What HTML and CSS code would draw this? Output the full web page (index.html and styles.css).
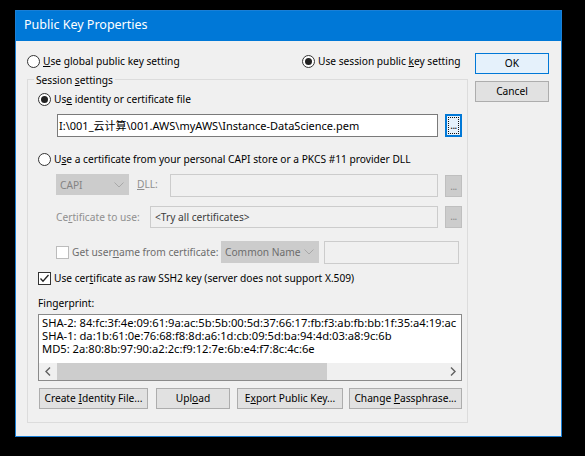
FILE: index.html
```html
<!DOCTYPE html>
<html lang="en">
<head>
<meta charset="utf-8">
<title>Public Key Properties</title>
<link rel="stylesheet" href="styles.css">
</head>
<body>
<div class="window">
  <div class="titlebar">Public Key Properties</div>
  <div class="client">
    <div class="main">
      <div class="scope-row">
        <div class="radio"><span class="rb"></span><span class="lbl"><u>U</u>se global public key setting</span></div>
        <div class="radio"><span class="rb on"></span><span class="lbl">Use session public <u>k</u>ey setting</span></div>
      </div>
      <div class="group">
        <div class="legend">Session <u>s</u>ettings</div>

        <div class="radio r-ident"><span class="rb on"></span><span class="lbl">Us<u>e</u> identity or certificate file</span></div>
        <div class="file-row">
          <div class="edit path">I:\001_云计算\001.AWS\myAWS\Instance-DataScience.pem</div>
          <div class="browse focus">...</div>
        </div>

        <div class="radio r-capi"><span class="rb"></span><span class="lbl">U<u>s</u>e a certificate from your personal CAPI store or a PKCS #11 provider DLL</span></div>
        <div class="capi-row">
          <div class="combo capi"><span>CAPI</span><svg class="chev" width="10" height="6" viewBox="0 0 10 6"><polyline points="0.5,0.5 5,5 9.5,0.5" fill="none" stroke="#a8a8a8" stroke-width="1"/></svg></div>
          <div class="dis-lbl dll"><u>D</u>LL:</div>
          <div class="edit dis"></div>
          <div class="browse dis">...</div>
        </div>

        <div class="cert-row">
          <div class="dis-lbl">Ce<u>r</u>tificate to use:</div>
          <div class="edit dis cert">&lt;Try all certificates&gt;</div>
          <div class="browse dis">...</div>
        </div>

        <div class="user-row">
          <div class="check-wrap"><span class="cb dis"></span><span class="user-lbl">Get user<u>n</u>ame from certificate:</span></div>
          <div class="combo cn"><span>Common Name</span><svg class="chev" width="10" height="6" viewBox="0 0 10 6"><polyline points="0.5,0.5 5,5 9.5,0.5" fill="none" stroke="#a8a8a8" stroke-width="1"/></svg></div>
          <div class="edit dis user-edit"></div>
        </div>

        <div class="raw-row">
          <span class="cb"><svg width="11" height="11" viewBox="0 0 11 11"><polyline points="1.5,5.5 4,8.2 9.5,2" fill="none" stroke="#222" stroke-width="1.3"/></svg></span>
          <span class="lbl">Use cer<u>t</u>ificate as raw SSH2 key (server does not support X.509)</span>
        </div>

        <div class="fp-label">Fingerprint:</div>
        <div class="fp-box">
          <div class="fp-text">
            <div>SHA-2: 84:fc:3f:4e:09:61:9a:ac:5b:5b:00:5d:37:66:17:fb:f3:ab:fb:bb:1f:35:a4:19:ac</div>
            <div>SHA-1: da:1b:61:0e:76:68:f8:8d:a6:1d:cb:09:5d:ba:94:4d:03:a8:9c:6b</div>
            <div>MD5: 2a:80:8b:97:90:a2:2c:f9:12:7e:6b:e4:f7:8c:4c:6e</div>
          </div>
          <div class="hscroll">
            <div class="sb-arrow"><svg width="6" height="9" viewBox="0 0 6 9"><polyline points="5,0.5 1,4.5 5,8.5" fill="none" stroke="#606060" stroke-width="1.4"/></svg></div>
            <div class="sb-thumb"></div>
            <div class="sb-track"></div>
            <div class="sb-arrow"><svg width="6" height="9" viewBox="0 0 6 9"><polyline points="1,0.5 5,4.5 1,8.5" fill="none" stroke="#606060" stroke-width="1.4"/></svg></div>
          </div>
        </div>

        <div class="btn-row">
          <button class="btn b-create">Create <u>I</u>dentity File...</button>
          <button class="btn b-upload">Upl<u>o</u>ad</button>
          <button class="btn b-export">E<u>x</u>port Public Key...</button>
          <button class="btn b-pass">Change <u>P</u>assphrase...</button>
        </div>
      </div>
    </div>
    <div class="side">
      <button class="btn default">OK</button>
      <button class="btn cancel">Cancel</button>
    </div>
  </div>
</div>
</body>
</html>
```

FILE: styles.css
```css
* { box-sizing: border-box; }
html, body { margin: 0; padding: 0; }
body {
  width: 585px;
  height: 456px;
  background: #000;
  overflow: hidden;
  font-family: "Noto Sans", "Noto Sans CJK SC", sans-serif;
  font-size: 10.2px;
  color: #000;
}
u { text-decoration: underline; text-underline-offset: 1px; }

.window {
  width: 547px;
  height: 427px;
  margin: 10px 0 0 15px;
  border: 1px solid #1a7fd6;
  background: #f0f0f0;
}
.titlebar {
  height: 30px;
  background: #0078d7;
  color: #fff;
  font-size: 12.5px;
  line-height: 28px;
  padding-left: 8px;
}
.client {
  display: grid;
  grid-template-columns: 459px 74px;
}
.main { padding: 13px 0 0 11px; }

.radio {
  display: flex;
  align-items: center;
  gap: 3px;
  height: 14px;
  line-height: 14px;
  white-space: nowrap;
}
.rb {
  width: 13px;
  height: 13px;
  border: 1px solid #333;
  border-radius: 50%;
  background: #fff;
  display: flex;
  align-items: center;
  justify-content: center;
  flex: none;
}
.rb.on::after {
  content: "";
  width: 7px;
  height: 7px;
  border-radius: 50%;
  background: #222;
}
.scope-row {
  display: grid;
  grid-template-columns: 275px auto;
  height: 14px;
}

.group {
  margin-top: 11px;
  width: 441px;
  height: 344px;
  border: 1px solid #dcdcdc;
  padding: 0 5px 0 10px;
}
.legend {
  width: fit-content;
  margin: -7px 0 0 -4px;
  padding: 0 2px;
  background: #f0f0f0;
  line-height: 15px;
  height: 14px;
}
.r-ident { margin-top: 5px; }

.edit {
  background: #fff;
  border: 1px solid #7a7a7a;
  white-space: nowrap;
  overflow: hidden;
}
.edit.dis {
  background: #f0f0f0;
  border-color: #cccccc;
}
.browse {
  width: 17px;
  background: #e1e1e1;
  border: 1px solid #adadad;
  text-align: center;
  font-size: 10px;
  line-height: 20px;
  letter-spacing: -0.5px;
}
.browse.focus {
  border: 2px solid #0078d7;
  background: #e5f1fb;
  outline: 1px dotted #111;
  outline-offset: -4px;
  color: #000;
  line-height: 19px;
}
.browse.dis {
  background: #cccccc;
  border-color: #bfbfbf;
  color: #8a8a8a;
}

.file-row {
  display: flex;
  margin-top: 8px;
  padding-left: 19px;
  height: 23px;
}
.path {
  width: 381px;
  height: 23px;
  font-size: 11px;
  line-height: 21px;
  padding-left: 1px;
}
.file-row .browse { margin-left: 7px; height: 23px; }

.r-capi { margin-top: 15px; }

.capi-row {
  display: grid;
  grid-template-columns: 73px 41px 268px 7px 17px;
  margin-top: 8px;
  padding-left: 18px;
  height: 23px;
}
.capi-row .browse { grid-column: 5; height: 22px; margin-top: 1px; }

.combo {
  display: flex;
  align-items: center;
  justify-content: space-between;
  background: #cccccc;
  border: 1px solid #cccccc;
  color: #838383;
  padding: 0 3px 0 3px;
  white-space: nowrap;
}
.combo.capi { height: 21px; }
.combo.capi .chev { margin-right: 1px; }
.dis-lbl {
  color: #8f8f8f;
  line-height: 20px;
  white-space: nowrap;
}
.dll { padding-left: 8px; }

.cert-row {
  display: grid;
  grid-template-columns: 94px 288px 7px 17px;
  margin-top: 9px;
  padding-left: 18px;
  height: 22px;
}
.cert-row .dis-lbl { line-height: 22px; }
.cert-row .browse { grid-column: 4; height: 22px; line-height: 19px; }
.cert {
  color: #3c3c3c;
  line-height: 20px;
  padding-left: 4px;
}

.user-row {
  display: grid;
  grid-template-columns: 165px 98px 5px 135px;
  margin-top: 13px;
  padding-left: 18px;
  height: 23px;
}
.check-wrap {
  display: flex;
  align-items: center;
  gap: 3px;
  white-space: nowrap;
  height: 22px;
}
.cb {
  width: 13px;
  height: 13px;
  border: 1px solid #333;
  background: #fff;
  display: flex;
  align-items: center;
  justify-content: center;
  flex: none;
}
.cb.dis { border-color: #bcbcbc; }
.user-lbl { color: #6d6d6d; }
.combo.cn {
  height: 22px;
  color: #6d6d6d;
  padding-left: 3px;
  padding-right: 4px;
}
.user-edit { grid-column: 4; height: 23px; }

.raw-row {
  display: flex;
  align-items: center;
  gap: 3px;
  margin-top: 7px;
  height: 14px;
  line-height: 14px;
  white-space: nowrap;
}

.fp-label {
  margin-top: 11px;
  height: 14px;
  line-height: 14px;
}
.fp-box {
  margin-top: 4px;
  width: 424px;
  height: 67px;
  border: 1px solid #8a8a8a;
  background: #fff;
  display: flex;
  flex-direction: column;
}
.fp-text {
  height: 48px;
  padding: 1px 0 0 3px;
  font-size: 11.2px;
  line-height: 13px;
  white-space: nowrap;
  overflow: hidden;
}
.hscroll {
  height: 17px;
  display: flex;
  background: #f0f0f0;
}
.sb-arrow {
  width: 17px;
  display: flex;
  align-items: center;
  justify-content: center;
  flex: none;
}
.sb-thumb {
  width: 270px;
  margin: 0 0 0 1px;
  background: #cdcdcd;
}
.sb-track { flex: 1; }

.btn {
  font-family: inherit;
  font-size: 10.2px;
  color: #000;
  background: #e1e1e1;
  border: 1px solid #adadad;
  padding: 0;
  margin: 0;
  height: 21px;
  line-height: 19px;
  text-align: center;
  white-space: nowrap;
}
.btn-row {
  display: flex;
  margin-top: 7px;
  padding-left: 1px;
  height: 21px;
}
.b-create { width: 109px; }
.b-upload { width: 74px; margin-left: 8px; }
.b-export { width: 106px; margin-left: 7px; }
.b-pass { width: 113px; margin-left: 6px; }

.side {
  display: flex;
  flex-direction: column;
  padding-top: 12px;
}
.side .btn { width: 74px; height: 21px; }
.btn.default {
  background: #e5f1fb;
  border-color: #0078d7;
}
.btn.cancel { margin-top: 7px; }
```
